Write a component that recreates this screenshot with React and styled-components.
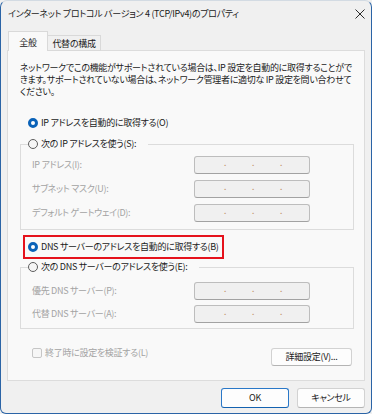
import React from "react";
import styled, { createGlobalStyle } from "styled-components";

const GlobalStyle = createGlobalStyle`
  html, body { margin: 0; padding: 0; background: #f0f0f0; }
  body {
    font-family: "Noto Sans CJK JP", "Noto Sans", sans-serif;
    font-size: 9px;
    letter-spacing: -0.3px;
    font-feature-settings: "palt";
    color: #1a1a1a;
  }
`;

const Window = styled.div`
  box-sizing: border-box;
  width: 372px;
  height: 414px;
  display: flex;
  flex-direction: column;
  background: #f0f0f0;
  border: 1px solid #2b64a6;
  border-top-color: #d3dbe3;
  border-radius: 7px 7px 6px 6px;
  overflow: hidden;
`;

const TitleBar = styled.div`
  box-sizing: border-box;
  height: 29px;
  flex: none;
  display: flex;
  align-items: flex-start;
  justify-content: space-between;
  padding: 6px 6px 0 7px;
`;

const Title = styled.div`
  line-height: 14px;
  color: #1b1b1b;
  white-space: nowrap;
`;

const CloseIcon = styled.svg`
  margin-top: 2px;
  width: 10px;
  height: 10px;
`;

const Content = styled.div`
  flex: 1;
  display: flex;
  flex-direction: column;
  padding: 1px 6px 0 6px;
`;

const TabRow = styled.div`
  display: flex;
  align-items: flex-end;
  height: 20px;
  padding-left: 1px;
  margin-bottom: -1px;
  position: relative;
  z-index: 1;
`;

const Tab = styled.div`
  box-sizing: border-box;
  width: ${(p) => p.$w}px;
  height: ${(p) => (p.$active ? 20 : 16)}px;
  margin-left: ${(p) => (p.$active ? 0 : -1)}px;
  padding-top: ${(p) => (p.$active ? 3 : 1)}px;
  border: 1px solid #d9d9d9;
  border-bottom: ${(p) => (p.$active ? "none" : "1px solid #d9d9d9")};
  background: ${(p) => (p.$active ? "#f9f9f9" : "#f0f0f0")};
  display: flex;
  align-items: center;
  justify-content: center;
  white-space: nowrap;
  line-height: 12px;
`;

const Panel = styled.div`
  box-sizing: border-box;
  height: 331px;
  flex: none;
  border: 1px solid #dcdcdc;
  background: #f9f9f9;
  padding: 11px 10px 0 12px;
  display: flex;
  flex-direction: column;
`;

const Desc = styled.p`
  margin: 0;
  line-height: 12px;
  white-space: nowrap;
  color: #1a1a1a;
`;

const RadioRow = styled.div`
  display: flex;
  align-items: center;
  gap: 3px;
  height: ${(p) => (p.$highlight ? 18 : 16)}px;
  width: fit-content;
  margin: ${(p) => p.$top || 0}px 0 0 ${(p) => (p.$inLegend ? 0 : p.$highlight ? 6 : 8)}px;
  padding: 0 ${(p) => (p.$highlight ? 2 : 0)}px 0 ${(p) => (p.$highlight ? 2 : 0)}px;
  outline: ${(p) => (p.$highlight ? "2px solid #e5121c" : "none")};
  outline-offset: 1px;
  white-space: nowrap;
  line-height: 14px;
`;

const RadioCircle = styled.span`
  box-sizing: border-box;
  flex: none;
  width: 10px;
  height: 10px;
  border-radius: 50%;
  background: ${(p) => (p.$checked ? "#ffffff" : "#f6f6f6")};
  border: ${(p) => (p.$checked ? "3px solid #0a62b8" : "1px solid #5d5d5d")};
`;

const Group = styled.fieldset`
  margin: ${(p) => p.$top}px 0 0 0;
  padding: 0 0 ${(p) => p.$bottom}px 7px;
  border: 1px solid #dcdcdc;
  min-width: 0;
`;

const Legend = styled.legend`
  padding: 0 12px 0 0;
  margin: 0;
`;

const FieldList = styled.div`
  display: flex;
  flex-direction: column;
  gap: ${(p) => p.$gap}px;
  margin-top: ${(p) => p.$top}px;
`;

const FieldRow = styled.div`
  display: grid;
  grid-template-columns: 162px 116px;
  align-items: center;
  height: 18px;
  padding-left: 4px;
`;

const FieldLabel = styled.span`
  color: #a3a3a3;
  white-space: nowrap;
  line-height: 14px;
`;

const IpBox = styled.div`
  box-sizing: border-box;
  width: 116px;
  height: 18px;
  background: #f0f0f0;
  border: 1px solid #bdbdbd;
  border-bottom-color: #a2a2a2;
  border-radius: 3px;
  display: flex;
  align-items: flex-start;
  padding-left: 16px;
`;

const Dot = styled.span`
  width: 28px;
  text-align: center;
  color: #c0906a;
  font-size: 10px;
  line-height: 10px;
`;

const BottomRow = styled.div`
  display: flex;
  justify-content: space-between;
  align-items: flex-start;
  margin-top: 16px;
  padding-right: 2px;
`;

const CheckRow = styled.div`
  display: flex;
  align-items: center;
  gap: 3px;
  height: 16px;
  padding-left: 12px;
  color: #a3a3a3;
  white-space: nowrap;
  line-height: 14px;
`;

const CheckBox = styled.span`
  box-sizing: border-box;
  width: 10px;
  height: 10px;
  border: 1px solid #c6c6c6;
  border-radius: 2px;
  background: #f6f6f6;
`;

const Button = styled.button`
  box-sizing: border-box;
  width: ${(p) => p.$w}px;
  height: ${(p) => p.$h}px;
  margin-top: ${(p) => p.$top || 0}px;
  padding: 0;
  font: inherit;
  letter-spacing: inherit;
  font-feature-settings: "palt";
  line-height: 14px;
  color: #1a1a1a;
  background: #fdfdfd;
  border: 1px solid ${(p) => (p.$primary ? "#2a78c8" : "#d2d2d2")};
  border-bottom-color: ${(p) => (p.$primary ? "#1462b0" : "#b4b4b4")};
  border-radius: 3px;
  white-space: nowrap;
`;

const Footer = styled.div`
  display: flex;
  justify-content: flex-end;
  gap: 8px;
  padding-top: 7px;
`;

function IpField({ label }) {
  return (
    <FieldRow>
      <FieldLabel>{label}</FieldLabel>
      <IpBox>
        <Dot>.</Dot>
        <Dot>.</Dot>
        <Dot>.</Dot>
      </IpBox>
    </FieldRow>
  );
}

export default function App() {
  return (
    <>
      <GlobalStyle />
      <Window>
        <TitleBar>
          <Title>インターネット プロトコル バージョン 4 (TCP/IPv4)のプロパティ</Title>
          <CloseIcon viewBox="0 0 10 10">
            <path d="M0.5 0.5 L9.5 9.5 M9.5 0.5 L0.5 9.5" stroke="#2b2b2b" strokeWidth="1" fill="none" />
          </CloseIcon>
        </TitleBar>
        <Content>
          <TabRow>
            <Tab $active $w={40}>全般</Tab>
            <Tab $w={54}>代替の構成</Tab>
          </TabRow>
          <Panel>
            <Desc>
              ネットワークでこの機能がサポートされている場合は、IP 設定を自動的に取得することがで
              <br />
              きます。サポートされていない場合は、ネットワーク管理者に適切な IP 設定を問い合わせて
              <br />
              ください。
            </Desc>
            <RadioRow $top={17}>
              <RadioCircle $checked />
              IP アドレスを自動的に取得する(O)
            </RadioRow>
            <Group $top={5} $bottom={7}>
              <Legend>
                <RadioRow $inLegend>
                  <RadioCircle />
                  次の IP アドレスを使う(S):
                </RadioRow>
              </Legend>
              <FieldList $top={4} $gap={6}>
                <IpField label="IP アドレス(I):" />
                <IpField label="サブネット マスク(U):" />
                <IpField label="デフォルト ゲートウェイ(D):" />
              </FieldList>
            </Group>
            <RadioRow $top={8} $highlight>
              <RadioCircle $checked />
              DNS サーバーのアドレスを自動的に取得する(B)
            </RadioRow>
            <Group $top={3} $bottom={5}>
              <Legend>
                <RadioRow $inLegend>
                  <RadioCircle />
                  次の DNS サーバーのアドレスを使う(E):
                </RadioRow>
              </Legend>
              <FieldList $top={7} $gap={5}>
                <IpField label="優先 DNS サーバー(P):" />
                <IpField label="代替 DNS サーバー(A):" />
              </FieldList>
            </Group>
            <BottomRow>
              <CheckRow>
                <CheckBox />
                終了時に設定を検証する(L)
              </CheckRow>
              <Button $w={81} $h={18} $top={3}>詳細設定(V)...</Button>
            </BottomRow>
          </Panel>
          <Footer>
            <Button $primary $w={68} $h={20}>OK</Button>
            <Button $w={68} $h={20}>キャンセル</Button>
          </Footer>
        </Content>
      </Window>
    </>
  );
}
